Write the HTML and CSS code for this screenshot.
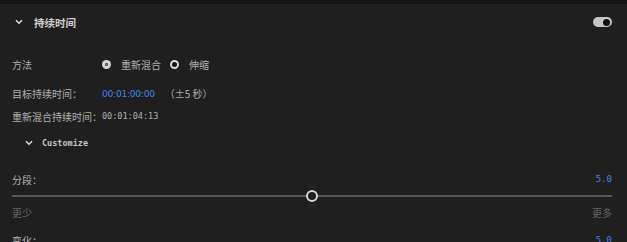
FILE: index.html
```html
<!DOCTYPE html>
<html>
<head>
<meta charset="utf-8">
<link rel="stylesheet" href="styles.css">
</head>
<body>
<div class="topbar"></div>
<div class="header">
  <svg class="chev" width="8" height="6" viewBox="0 0 8 6"><path d="M1 1.2 L4 4.2 L7 1.2" fill="none" stroke="#d8d8d8" stroke-width="1.6"/></svg>
  <span class="title">持续时间</span>
  <span class="toggle"><span class="knob"></span></span>
</div>
<div class="content">
  <div class="row r1">
    <span class="label">方法</span>
    <span class="opts">
      <span class="radio on"></span><span class="opt">重新混合</span>
      <span class="radio off"></span><span class="opt">伸缩</span>
    </span>
  </div>
  <div class="row r2">
    <span class="label">目标持续时间：</span>
    <span class="blue time">00:01:00:00</span>
    <span class="tol">（±5 秒）</span>
  </div>
  <div class="row r3">
    <span>重新混合持续时间：</span><span class="mono">00:01:04:13</span>
  </div>
  <div class="row r4">
    <svg class="chev" width="8" height="6" viewBox="0 0 8 6"><path d="M1 1.2 L4 4.2 L7 1.2" fill="none" stroke="#d8d8d8" stroke-width="1.6"/></svg>
    <span class="cust">Customize</span>
  </div>
  <div class="row r5 spread">
    <span>分段：</span><span class="blue num">5.0</span>
  </div>
  <div class="slider">
    <div class="track"></div>
    <div class="thumb"></div>
  </div>
  <div class="row r6 spread dim">
    <span>更少</span><span>更多</span>
  </div>
  <div class="row r7 spread">
    <span>变化：</span><span class="blue num">5.0</span>
  </div>
</div>
</body>
</html>
```
FILE: styles.css
```css
html, body {
  margin: 0;
  padding: 0;
  background: #1f1f1f;
  overflow: hidden;
  height: 242px;
}
body {
  font-family: "Noto Sans CJK SC", "Noto Sans", sans-serif;
  font-size: 10px;
  color: #b0b0b0;
}
.topbar {
  height: 4px;
  background: #171717;
  border-bottom: 1px solid #141414;
  box-sizing: border-box;
}
.header {
  height: 36px;
  display: flex;
  align-items: center;
  padding: 0 15px 0 15px;
}
.header .chev { margin-right: 11px; }
.title {
  font-weight: bold;
  font-size: 10.5px;
  color: #d0d0d0;
  flex: 1;
}
.toggle {
  width: 19px;
  height: 10px;
  border-radius: 5px;
  background: #c6c6c6;
  display: flex;
  align-items: center;
  justify-content: flex-end;
  padding-right: 2px;
  box-sizing: border-box;
}
.knob {
  width: 7px;
  height: 7px;
  border-radius: 50%;
  background: #111;
}
.content {
  padding: 0 15px 0 12px;
}
.row {
  height: 20px;
  display: flex;
  align-items: center;
}
.spread { justify-content: space-between; }
.r1 { margin-top: 14px; }
.r2 { margin-top: 9px; }
.r3 { margin-top: 3px; }
.r4 { margin-top: 7px; padding-left: 13px; }
.r5 { margin-top: 16px; }
.r6 { margin-top: 0; }
.r7 { margin-top: 8px; }
.label { width: 90px; }
.opts { display: flex; align-items: center; }
.radio {
  width: 9px;
  height: 9px;
  border-radius: 50%;
  box-sizing: border-box;
  margin-right: 10px;
}
.radio.on {
  background: radial-gradient(circle, #6a6a6a 0 1.5px, #d4d4d4 2px);
}
.radio.off {
  border: 2px solid #dcdcdc;
  background: #111;
}
.opt { margin-right: 9px; }
.blue { color: #3f86e0; }
.time { font-family: "DejaVu Sans", sans-serif; font-size: 9.2px; letter-spacing: -0.3px; }
.tol { margin-left: 10px; }
.mono { font-family: "DejaVu Sans Mono", monospace; font-size: 8.5px; }
.r4 .chev { margin-right: 9px; }
.cust {
  font-family: "DejaVu Sans Mono", monospace;
  font-weight: bold;
  font-size: 8.5px;
  color: #c4c4c4;
}
.num { font-family: "DejaVu Sans Mono", monospace; font-size: 9px; }
.slider {
  position: relative;
  height: 12px;
  margin-top: 1px;
  display: flex;
  align-items: center;
}
.track {
  flex: 1;
  height: 2px;
  background: #575757;
}
.thumb {
  position: absolute;
  left: 294px;
  top: 0;
  width: 12px;
  height: 12px;
  border-radius: 50%;
  border: 2px solid #d6d6d6;
  background: #1f1f1f;
  box-sizing: border-box;
}
.dim { color: #666; }
```
